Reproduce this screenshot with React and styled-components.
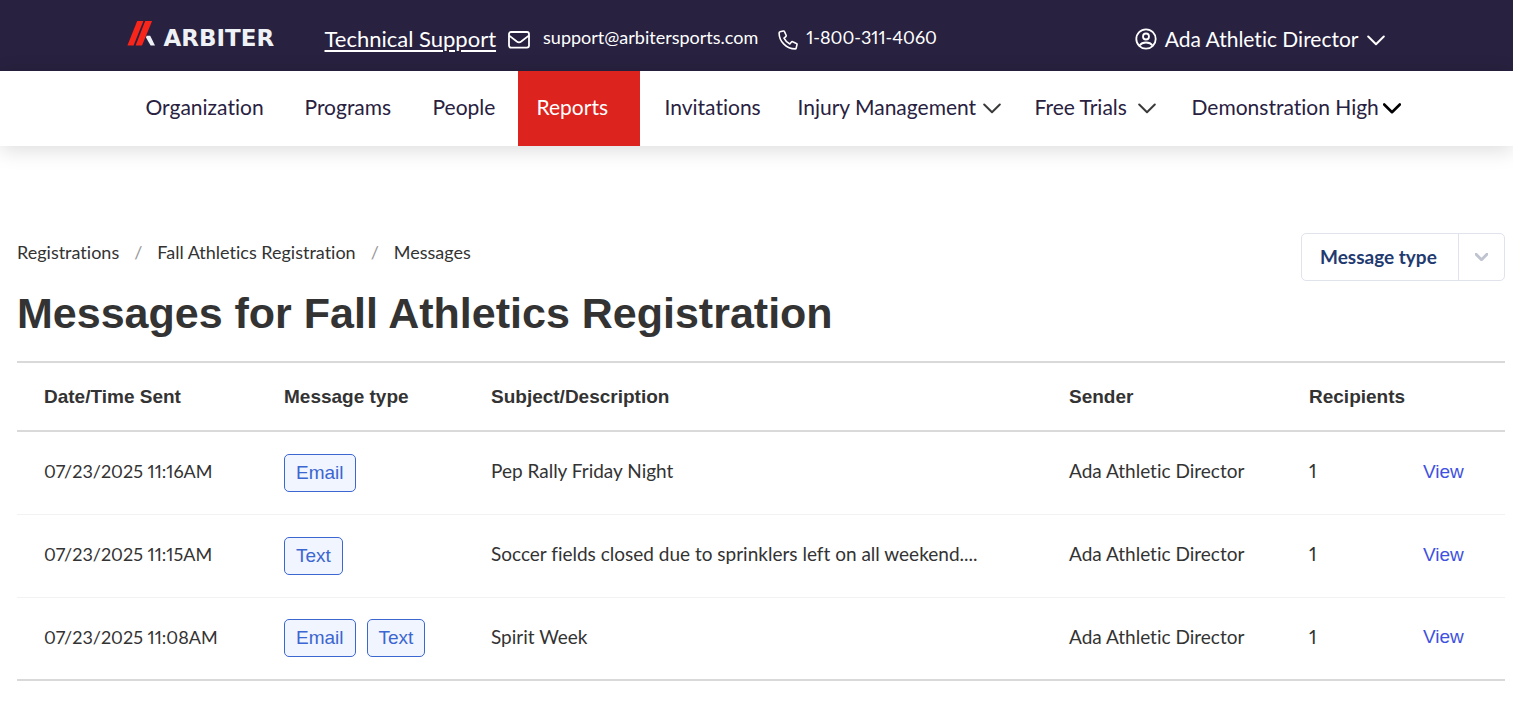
import React from "react";
import styled, { createGlobalStyle } from "styled-components";

const GlobalStyle = createGlobalStyle`
  *, *::before, *::after { box-sizing: border-box; }
  body {
    margin: 0;
    background: #fff;
    color: #333;
    font-family: Lato, "Liberation Sans", sans-serif;
    font-size: 18px;
    line-height: 24px;
    font-variant-ligatures: none;
    font-variant-numeric: proportional-nums;
  }
  a { color: inherit; text-decoration: none; }
  button, select { font: inherit; color: inherit; background: none; border: 0; padding: 0; margin: 0; cursor: pointer; }
`;

const TopBar = styled.header`
  background: #28213f;
  color: #fff;
`;

const Container = styled.div`
  display: flex;
  align-items: center;
  max-width: 1260px;
  margin: 0 auto;
`;

const TopContainer = styled(Container)`
  height: 71px;
  padding: 6px 2px 0 0;
`;

const Logo = styled.a`
  display: flex;
  align-items: flex-end;
  gap: 8px;
  width: 198px;
  padding-bottom: 10px;
  font-family: "DejaVu Sans", sans-serif;
  font-weight: 700;
  font-size: 23px;
  line-height: 17px;
  color: #eef1f5;
`;

const Contact = styled.div`
  display: flex;
  align-items: center;
  flex: 1;
`;

const SupportLink = styled.a`
  font-size: 22px;
  text-decoration: underline;
  text-underline-offset: 3px;
  text-decoration-thickness: 2px;
  margin-right: 12px;
`;

const ContactLink = styled.a`
  display: flex;
  align-items: center;
  gap: ${(p) => p.$gap}px;
  margin-right: 20px;
  padding-top: 3px;
  font-size: 18px;
  span { padding-bottom: 6px; }
`;

const UserButton = styled.button`
  display: flex;
  align-items: center;
  gap: 8px;
  font-size: 21px;
`;

const NavBar = styled.nav`
  position: relative;
  background: #fff;
  box-shadow: 0 4px 20px rgba(0, 0, 0, 0.14);
`;

const NavItem = styled.a`
  display: flex;
  align-items: center;
  flex: none;
  gap: ${(p) => p.$gap || 0}px;
  width: ${(p) => p.$width}px;
  height: 75px;
  padding: 0 0 3px 19px;
  margin-right: ${(p) => (p.$active ? 6 : 0)}px;
  font-size: 21px;
  white-space: nowrap;
  color: ${(p) => (p.$active ? "#fff" : "#28213f")};
  background: ${(p) => (p.$active ? "#dc231e" : "transparent")};
`;

const Main = styled.main`
  padding: 87px 8px 40px 17px;
`;

const PageHead = styled.div`
  display: flex;
  justify-content: space-between;
  align-items: flex-start;
`;

const Crumbs = styled.ol`
  display: flex;
  list-style: none;
  margin: 0;
  padding: 7px 0 0;
  li + li::before {
    content: "/";
    color: #999;
    margin: 0 15px;
  }
`;

const Filter = styled.label`
  display: grid;
  width: 204px;
  height: 48px;
  border: 1px solid #e0e3ec;
  border-radius: 5px;
  overflow: hidden;
`;

const FilterSelect = styled.select`
  grid-area: 1 / 1;
  appearance: none;
  padding-left: 18px;
  font-size: 19px;
  font-weight: 700;
  color: #223a70;
`;

const FilterArrow = styled.span`
  grid-area: 1 / 1;
  justify-self: end;
  display: flex;
  align-items: center;
  justify-content: center;
  width: 46px;
  border-left: 1px solid #e0e3ec;
  pointer-events: none;
`;

const Title = styled.h1`
  margin: 4px 0 20px;
  font-family: "Liberation Sans", Arial, sans-serif;
  font-size: 43px;
  line-height: 56px;
  font-weight: 700;
`;

const Table = styled.table`
  width: 100%;
  table-layout: fixed;
  border-collapse: collapse;
  border-top: 2px solid #d9d9d9;
  border-bottom: 2px solid #d9d9d9;
`;

const HeadCell = styled.th`
  width: ${(p) => (p.$width ? `${p.$width}px` : "auto")};
  height: 69px;
  padding: 0 0 0 27px;
  border-bottom: 2px solid #d9d9d9;
  font-family: "Liberation Sans", Arial, sans-serif;
  font-size: 19px;
  text-align: left;
`;

const Row = styled.tr`
  & + & { border-top: 1px solid #f2f2f2; }
`;

const Cell = styled.td`
  height: 83px;
  padding: 0 0 3px 27px;
  font-size: 19px;
`;

const DateCell = styled(Cell)`
  font-size: 18px;
`;

const Tags = styled.div`
  display: flex;
  gap: 11px;
  padding-top: 3px;
`;

const Tag = styled.span`
  padding: 6px 11px;
  border: 1px solid #3c66d0;
  border-radius: 5px;
  background: #f0f5ff;
  color: #3c66d0;
  font-family: "Liberation Sans", Arial, sans-serif;
  font-size: 19px;
`;

const ViewLink = styled.a`
  color: #3f51e0;
  font-family: "Liberation Sans", Arial, sans-serif;
  font-size: 19px;
`;

const ChevronSvg = styled.svg`
  flex: none;
  margin-top: ${(p) => p.$drop || 0}px;
`;

const Chevron = ({ color, width = 2, w = 18, h = 11, drop = 3 }) => (
  <ChevronSvg $drop={drop} width={w} height={h} viewBox="0 0 18 11" fill="none" stroke={color} strokeWidth={width} strokeLinecap="round" strokeLinejoin="round" aria-hidden="true">
    <path d="M1.2 1.5 9 9.2l7.8-7.7" />
  </ChevronSvg>
);

const LogoMark = () => (
  <svg width="29" height="26" viewBox="0 0 29 26" aria-hidden="true">
    <path d="M10.2 0h6.2L6.6 24.5H.4z" fill="#f8251b" />
    <path d="M18.2 0h6.9L15 24.5H8.6z" fill="#f8251b" />
    <path d="M19.6 14.800h3.600L28 24.500h-4.400l-4.600-8z" fill="#eef1f5" />
  </svg>
);

const MailIcon = () => (
  <svg width="22" height="18" viewBox="0 0 22 18" fill="none" stroke="#fff" strokeWidth="1.8" strokeLinejoin="round" aria-hidden="true">
    <rect x="1" y="1" width="20" height="15.6" rx="2" />
    <path d="M1.2 4.6 8.8 10.5q2.2 1.6 4.4 0l7.6-5.9" />
  </svg>
);

const PhoneIcon = () => (
  <svg width="20" height="20" viewBox="0 0 20 20" fill="none" stroke="#fff" strokeWidth="1.6" strokeLinejoin="round" aria-hidden="true">
    <path d="M2 1.8 5.3 1c.5-.1 1 .1 1.2.6l1.6 3.7c.2.5.1 1-.3 1.3L6 8.2c1.2 2.5 3.2 4.5 5.8 5.8l1.6-1.9c.3-.4.9-.5 1.3-.3l3.7 1.6c.5.2.7.7.6 1.2l-.8 3.4c-.1.5-.5.9-1.1.9C8.5 18.9 1.1 11.5 1.1 2.9c0-.5.4-1 .9-1.1z" />
  </svg>
);

const UserIcon = () => (
  <svg width="22" height="22" viewBox="0 0 22 22" fill="none" stroke="#fff" strokeWidth="1.8" aria-hidden="true">
    <circle cx="11" cy="11" r="9.7" />
    <circle cx="11" cy="8.5" r="3" />
    <path d="M4.5 17.5C6 15.3 8 14.5 11 14.5s5 .8 6.5 3" />
  </svg>
);

const navItems = [
  { label: "Organization", width: 159 },
  { label: "Programs", width: 128 },
  { label: "People", width: 104 },
  { label: "Reports", width: 122, active: true },
  { label: "Invitations", width: 133 },
  { label: "Injury Management", width: 237, chevron: "#3a3a3a", gap: 7 },
  { label: "Free Trials", width: 157, chevron: "#3a3a3a", gap: 11 },
  { label: "Demonstration High", width: 230, chevron: "#000", gap: 4, bold: true },
];

const messages = [
  { sent: "07/23/2025 11:16AM", types: ["Email"], subject: "Pep Rally Friday Night" },
  { sent: "07/23/2025 11:15AM", types: ["Text"], subject: "Soccer fields closed due to sprinklers left on all weekend...." },
  { sent: "07/23/2025 11:08AM", types: ["Email", "Text"], subject: "Spirit Week" },
];

export default function App() {
  return (
    <>
      <GlobalStyle />
      <TopBar>
        <TopContainer>
          <Logo href="#"><LogoMark />ARBITER</Logo>
          <Contact>
            <SupportLink href="#">Technical Support</SupportLink>
            <ContactLink href="#" $gap={13}><MailIcon /><span>support@arbitersports.com</span></ContactLink>
            <ContactLink href="#" $gap={8}><PhoneIcon /><span>1-800-311-4060</span></ContactLink>
          </Contact>
          <UserButton type="button"><UserIcon />Ada Athletic Director<Chevron color="#fff" /></UserButton>
        </TopContainer>
      </TopBar>
      <NavBar>
        <Container>
          {navItems.map((n) => (
            <NavItem key={n.label} href="#" $width={n.width} $active={n.active} $gap={n.gap}>
              {n.label}
              {n.chevron && <Chevron color={n.chevron} width={n.bold ? 2.6 : 2} />}
            </NavItem>
          ))}
        </Container>
      </NavBar>
      <Main>
        <PageHead>
          <Crumbs>
            <li><a href="#">Registrations</a></li>
            <li><a href="#">Fall Athletics Registration</a></li>
            <li>Messages</li>
          </Crumbs>
          <Filter>
            <FilterSelect aria-label="Message type" defaultValue="">
              <option value="">Message type</option>
              <option>Email</option>
              <option>Text</option>
            </FilterSelect>
            <FilterArrow><Chevron color="#bfc4d0" width={4} w={13} h={8} drop={0} /></FilterArrow>
          </Filter>
        </PageHead>
        <Title>Messages for Fall Athletics Registration</Title>
        <Table>
          <thead>
            <tr>
              <HeadCell $width={240}>Date/Time Sent</HeadCell>
              <HeadCell $width={207}>Message type</HeadCell>
              <HeadCell>Subject/Description</HeadCell>
              <HeadCell $width={240}>Sender</HeadCell>
              <HeadCell $width={114}>Recipients</HeadCell>
              <HeadCell $width={109} aria-label="Actions" />
            </tr>
          </thead>
          <tbody>
            {messages.map((m) => (
              <Row key={m.sent}>
                <DateCell>{m.sent}</DateCell>
                <Cell><Tags>{m.types.map((t) => <Tag key={t}>{t}</Tag>)}</Tags></Cell>
                <Cell>{m.subject}</Cell>
                <Cell>Ada Athletic Director</Cell>
                <Cell>1</Cell>
                <Cell><ViewLink href="#">View</ViewLink></Cell>
              </Row>
            ))}
          </tbody>
        </Table>
      </Main>
    </>
  );
}
